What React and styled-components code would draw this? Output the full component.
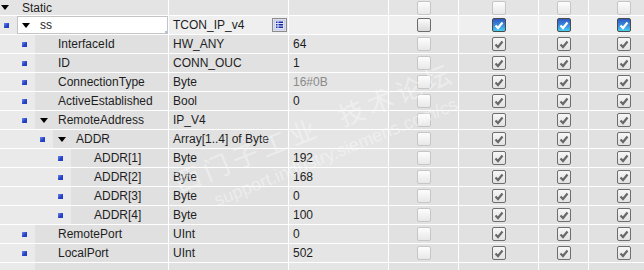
import React from "react";
import styled, { createGlobalStyle } from "styled-components";

// Spalten: Name | Datentyp | Startwert | 4x Checkbox
const COLS = "169px 120px 100px 70px 80px 50px 55px";

const rows = [
  { level: 2, name: "InterfaceId", type: "HW_ANY", value: "64" },
  { level: 2, name: "ID", type: "CONN_OUC", value: "1" },
  { level: 2, name: "ConnectionType", type: "Byte", value: "16#0B", dim: true },
  { level: 2, name: "ActiveEstablished", type: "Bool", value: "0" },
  { level: 2, name: "RemoteAddress", type: "IP_V4", value: "", open: true },
  { level: 3, name: "ADDR", type: "Array[1..4] of Byte", value: "", open: true },
  { level: 4, name: "ADDR[1]", type: "Byte", value: "192" },
  { level: 4, name: "ADDR[2]", type: "Byte", value: "168" },
  { level: 4, name: "ADDR[3]", type: "Byte", value: "0" },
  { level: 4, name: "ADDR[4]", type: "Byte", value: "100" },
  { level: 2, name: "RemotePort", type: "UInt", value: "0" },
  { level: 2, name: "LocalPort", type: "UInt", value: "502" },
];

const gutterWidth = (level) => 17 + 18 * (level - 1);

const Check = ({ variant }) => (
  <Box $variant={variant}>
    {(variant === "blue" || variant === "gray") && (
      <svg width="10" height="9" viewBox="0 0 10 9">
        <path
          d="M1.5 4.5 L4 7 L8.5 1.5"
          fill="none"
          stroke={variant === "blue" ? "#fff" : "#686868"}
          strokeWidth="2.2"
        />
      </svg>
    )}
  </Box>
);

const Checks = ({ first, rest }) => (
  <>
    <CheckCell>
      <Check variant={first} />
    </CheckCell>
    <CheckCell>
      <Check variant={rest} />
    </CheckCell>
    <CheckCell>
      <Check variant={rest} />
    </CheckCell>
    <CheckCell $last>
      <Check variant={rest} />
    </CheckCell>
  </>
);

const ListIcon = () => (
  <svg width="15" height="14" viewBox="0 0 15 14">
    <rect x="0.5" y="0.5" width="14" height="13" fill="#f2f2f2" stroke="#8c8c8c" />
    <rect x="2" y="2" width="11" height="10" fill="#dfe5fb" stroke="#9aa6d8" strokeWidth="0.6" />
    {[4, 6.5, 9].map((y) => (
      <g key={y}>
        <rect x="4" y={y - 0.5} width="1.5" height="1.5" fill="#1c2a9c" />
        <rect x="6.5" y={y - 0.5} width="4.5" height="1.5" fill="#1c2a9c" />
      </g>
    ))}
  </svg>
);

function App() {
  return (
    <>
      <GlobalStyle />
      <Table>
        <Row $bg="#e4e4e4">
          <NameCell>
            <StaticName>
              <Toggle $w={22} $ml={1}>
                <Triangle />
              </Toggle>
              Static
            </StaticName>
          </NameCell>
          <Cell />
          <Cell />
          <Checks first="faded" rest="faded" />
        </Row>

        <Row $h={19} $bg="#efefef">
          <NameCell>
            <Gutter $w={gutterWidth(1)} $bg="#e9e9e9">
              <Bullet />
            </Gutter>
            <EditName>
              <Toggle $w={23} $ml={5}>
                <Triangle />
              </Toggle>
              ss
              <Handle />
            </EditName>
          </NameCell>
          <Cell>
            TCON_IP_v4
            <IconSlot>
              <ListIcon />
            </IconSlot>
          </Cell>
          <Cell />
          <Checks first="dark" rest="blue" />
        </Row>

        {rows.map((r) => (
          <Row key={r.name} $h={19}>
            <NameCell>
              <Gutter $w={gutterWidth(r.level)}>
                <Bullet />
              </Gutter>
              <NamePart>
                <Toggle $w={23} $ml={5}>
                  {r.open && <Triangle />}
                </Toggle>
                {r.name}
              </NamePart>
            </NameCell>
            <Cell>{r.type}</Cell>
            <Cell $bg="#e5e5e5" $dim={r.dim}>
              {r.value}
            </Cell>
            <Checks first="faded" rest="gray" />
          </Row>
        ))}

        <Row $h={19}>
          <NameCell>
            <Gutter $w={35} />
            <NamePart />
          </NameCell>
          <Cell />
          <Cell $bg="#e5e5e5" />
          <CheckCell />
          <CheckCell />
          <CheckCell />
          <CheckCell $last />
        </Row>

        <Watermark>
          <BigMark>西门子工业&nbsp;&nbsp;技术论坛</BigMark>
          <SmallMark>support.industry.siemens.com/cs</SmallMark>
        </Watermark>
      </Table>
    </>
  );
}

export default App;

// Style
const GlobalStyle = createGlobalStyle`
  html, body {
    margin: 0;
    padding: 0;
    background: #ededed;
  }
  body {
    font-family: "Liberation Sans", Arial, sans-serif;
    font-size: 12px;
    color: #1e1e1e;
  }
`;

const Table = styled.div`
  position: relative;
  width: 644px;
  height: 270px;
  overflow: hidden;
  background: #e1e1e1;
`;

const Row = styled.div`
  display: grid;
  grid-template-columns: ${COLS};
  height: ${(p) => p.$h || 16}px;
  box-sizing: border-box;
  border-bottom: 1px solid #ffffff;
  background: ${(p) => p.$bg || "#e1e1e1"};
`;

const Cell = styled.div`
  display: flex;
  align-items: center;
  padding-left: 4px;
  border-right: 1px solid #ffffff;
  white-space: nowrap;
  overflow: hidden;
  position: relative;
  ${(p) => p.$bg && `background: ${p.$bg};`}
  color: ${(p) => (p.$dim ? "#8a8a8a" : "#1e1e1e")};
`;

const NameCell = styled.div`
  display: flex;
  border-right: 1px solid #ffffff;
  overflow: hidden;
`;

const StaticName = styled.div`
  flex: 1;
  display: flex;
  align-items: center;
`;

const Gutter = styled.div`
  flex: 0 0 ${(p) => p.$w}px;
  display: flex;
  align-items: center;
  justify-content: flex-end;
  padding-right: 8px;
  box-sizing: border-box;
  background: ${(p) => p.$bg || "#eaeaea"};
`;

const Bullet = styled.span`
  width: 5px;
  height: 5px;
  background: linear-gradient(135deg, #6f86ee, #2340c4 60%);
`;

const NamePart = styled.div`
  flex: 1;
  display: flex;
  align-items: center;
  white-space: nowrap;
  background: #e0e0e0;
`;

const EditName = styled(NamePart)`
  position: relative;
  background: #ffffff;
  box-shadow: inset 0 0 0 1px #c4c4c4;
`;

const Handle = styled.span`
  position: absolute;
  right: -1px;
  bottom: -1px;
  width: 4px;
  height: 4px;
  background: #b9c3d0;
`;

const Toggle = styled.span`
  flex: 0 0 ${(p) => p.$w}px;
  display: flex;
  align-items: center;
  padding-left: ${(p) => p.$ml}px;
  box-sizing: border-box;
`;

const Triangle = styled.span`
  width: 0;
  height: 0;
  border-left: 4px solid transparent;
  border-right: 4px solid transparent;
  border-top: 5px solid #000000;
`;

const IconSlot = styled.span`
  position: absolute;
  left: 103px;
  top: 2px;
  display: flex;
`;

const CheckCell = styled.div`
  display: flex;
  align-items: center;
  justify-content: ${(p) => (p.$last ? "flex-start" : "center")};
  padding-left: ${(p) => (p.$last ? 28 : 0)}px;
  border-right: ${(p) => (p.$last ? "none" : "1px solid #ffffff")};
`;

const boxStyles = {
  faded: `
    border: 1px solid #c6c6c6;
    background: linear-gradient(#fdfdfd, #e8e8e8);
  `,
  dark: `
    border: 1px solid #6c6c6c;
    background: linear-gradient(#fbfbfb, #dadada);
  `,
  blue: `
    border: 1px solid #4b4b4b;
    background: linear-gradient(#2c5ac2, #3a8fe0 55%, #45d2f2);
  `,
  gray: `
    border: 1px solid #6e6e6e;
    background: linear-gradient(#f6f6f6, #e2e2e2);
  `,
};

const Box = styled.span`
  width: 14px;
  height: 14px;
  box-sizing: border-box;
  border-radius: 2px;
  display: flex;
  align-items: center;
  justify-content: center;
  ${(p) => boxStyles[p.$variant]}
`;

const Watermark = styled.div`
  position: absolute;
  left: 168px;
  top: 165px;
  transform: rotate(-22deg);
  transform-origin: left top;
  pointer-events: none;
  color: rgba(255, 255, 255, 0.4);
  display: flex;
  flex-direction: column;
  gap: 4px;
`;

const BigMark = styled.div`
  font-family: "Noto Sans CJK SC", sans-serif;
  font-size: 26px;
  letter-spacing: 5px;
  white-space: nowrap;
`;

const SmallMark = styled.div`
  font-family: "Liberation Sans", Arial, sans-serif;
  font-size: 18px;
  padding-left: 30px;
  white-space: nowrap;
`;
